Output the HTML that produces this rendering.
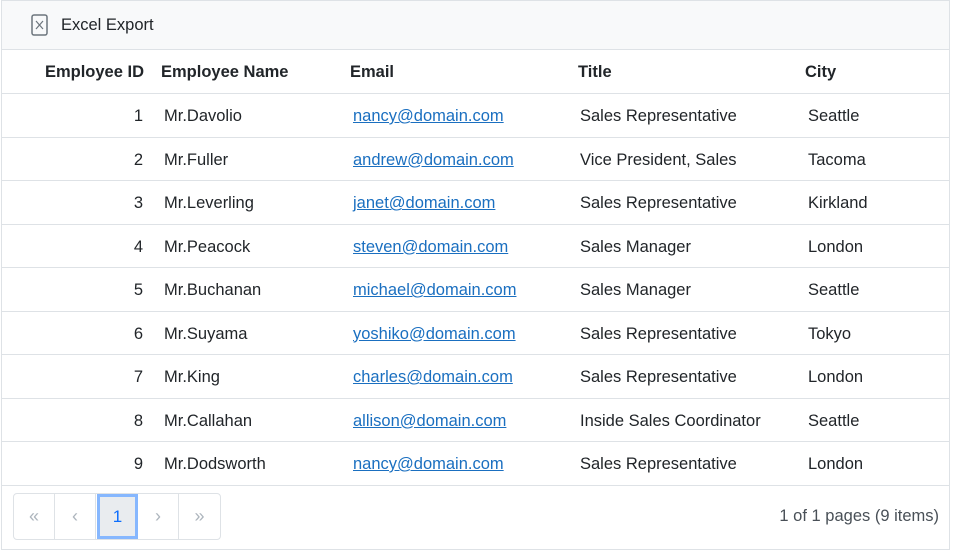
<!DOCTYPE html>
<html><head><style>
*{box-sizing:border-box;margin:0;padding:0}
body{width:955px;height:553px;background:#fff;font-family:"Liberation Sans",sans-serif;color:#212529;position:relative;overflow:hidden}
.grid{position:absolute;left:1px;top:0;width:949px;height:550px;border:1px solid #dee2e6}
.tb{height:49px;background:#f8f9fa;border-bottom:1px solid #dee2e6;position:relative}
.tb svg{position:absolute;left:29px;top:13px}
.tb span{position:absolute;left:59px;top:15px;font-size:16.5px;color:#212529}
.row{position:relative;height:43.5px;border-bottom:1px solid #dee2e6;font-size:16.5px}
.row div{position:absolute;top:13px;white-space:nowrap}
.h div{font-weight:bold;top:13px}
.c1{right:805px}.c2{left:162px}.c3{left:351px}.c4{left:578px}.c5{left:806px}
.row:not(.h) .c1{right:806px}.row:not(.h) .c2{left:162px}
a{color:#1a6fc0;text-decoration:underline}
.pager{position:absolute;left:13px;top:493px;width:208px;height:47px;border:1px solid #dee2e6;border-radius:4px;display:flex}
.pager div{width:41.5px;height:45px;border-right:1px solid #dee2e6;text-align:center;line-height:45px;color:#adb5bd;font-size:18px}
.pager div:last-child{border-right:none}
.pager .a{background:#e9ecef;border:3px solid #86b7fe;color:#0d6efd;line-height:39px;font-size:17px;margin-left:1px}
.info{position:absolute;right:16px;top:507px;font-size:16.5px;color:#495057}
</style></head><body>
<div class="grid">
<div class="tb"><svg width="18" height="22" viewBox="0 0 18 22"><rect x="1" y="1" width="15" height="20" rx="2" fill="none" stroke="#6c757d" stroke-width="1.5"/><path d="M5 7L12 15M12 7L5 15" stroke="#6c757d" stroke-width="1.2"/></svg><span>Excel Export</span></div>
<div class="row h" style="height:44px"><div class="c1">Employee ID</div><div class="c2" style="left:159px">Employee Name</div><div class="c3" style="left:348px">Email</div><div class="c4" style="left:576px">Title</div><div class="c5" style="left:803px">City</div></div>
<div class="row"><div class="c1">1</div><div class="c2">Mr.Davolio</div><div class="c3"><a>nancy@domain.com</a></div><div class="c4">Sales Representative</div><div class="c5">Seattle</div></div>
<div class="row"><div class="c1">2</div><div class="c2">Mr.Fuller</div><div class="c3"><a>andrew@domain.com</a></div><div class="c4">Vice President, Sales</div><div class="c5">Tacoma</div></div>
<div class="row"><div class="c1">3</div><div class="c2">Mr.Leverling</div><div class="c3"><a>janet@domain.com</a></div><div class="c4">Sales Representative</div><div class="c5">Kirkland</div></div>
<div class="row"><div class="c1">4</div><div class="c2">Mr.Peacock</div><div class="c3"><a>steven@domain.com</a></div><div class="c4">Sales Manager</div><div class="c5">London</div></div>
<div class="row"><div class="c1">5</div><div class="c2">Mr.Buchanan</div><div class="c3"><a>michael@domain.com</a></div><div class="c4">Sales Manager</div><div class="c5">Seattle</div></div>
<div class="row"><div class="c1">6</div><div class="c2">Mr.Suyama</div><div class="c3"><a>yoshiko@domain.com</a></div><div class="c4">Sales Representative</div><div class="c5">Tokyo</div></div>
<div class="row"><div class="c1">7</div><div class="c2">Mr.King</div><div class="c3"><a>charles@domain.com</a></div><div class="c4">Sales Representative</div><div class="c5">London</div></div>
<div class="row"><div class="c1">8</div><div class="c2">Mr.Callahan</div><div class="c3"><a>allison@domain.com</a></div><div class="c4">Inside Sales Coordinator</div><div class="c5">Seattle</div></div>
<div class="row"><div class="c1">9</div><div class="c2">Mr.Dodsworth</div><div class="c3"><a>nancy@domain.com</a></div><div class="c4">Sales Representative</div><div class="c5">London</div></div>
</div>
<div class="pager"><div>«</div><div>‹</div><div class="a">1</div><div>›</div><div>»</div></div>
<div class="info">1 of 1 pages (9 items)</div>
</body></html>
